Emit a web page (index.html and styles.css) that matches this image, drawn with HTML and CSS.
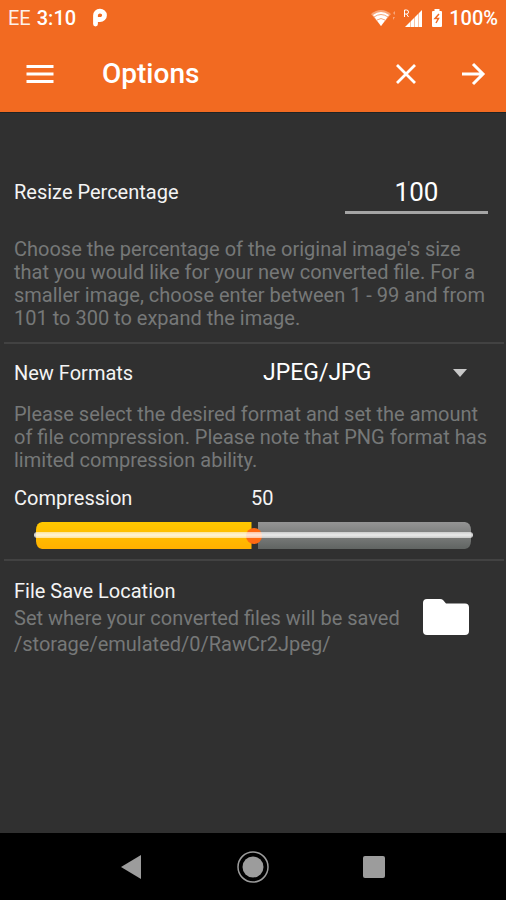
FILE: index.html
```html
<!DOCTYPE html>
<html lang="en">
<head>
<meta charset="utf-8">
<meta name="viewport" content="width=device-width, initial-scale=1">
<title>Options</title>
<link rel="stylesheet" href="styles.css">
</head>
<body>
<header class="top">
  <div class="status">
    <span class="carrier">EE</span>
    <span class="strong">3:10</span>
    <svg class="p-icon" width="16" height="20" viewBox="0 0 16 20" aria-hidden="true"><path d="M3.500 16V7.500A4.500 4.200 0 1 1 8 11.500H6.500" fill="none" stroke="#fff" stroke-width="4.800" stroke-linecap="round" stroke-linejoin="round"/></svg>
    <span class="grow"></span>
    <svg width="56" height="22" viewBox="0 0 56 22" aria-hidden="true">
      <path d="M0 7Q10 -1 20 7L10 19Z" fill="#fff" opacity=".4"/>
      <path d="M2 8Q10 2 18 8L10 19Z" fill="#fff"/>
      <path d="M3 10Q10 5 17 10M6 13Q10 10 14 13" fill="none" stroke="#f26a21" stroke-width="1" opacity=".6"/>
      <path d="M22 6l2-2v4zM22 10h2l-2 3z" fill="#fff" opacity=".4"/>
      <path d="M33.500 10V3H35.500Q37.500 3 37.500 5T35.500 7H33.500M35.500 7L37.500 10" fill="none" stroke="#fff" stroke-width="1"/>
      <path d="M34 20L51 3V20Z" fill="#fff"/>
      <path d="M39.500 14V20M43.500 10V20M47.500 6V20" stroke="#f26a21" stroke-width="1" opacity=".4"/>
    </svg>
    <svg class="battery" width="12" height="20" viewBox="0 0 12 20" aria-hidden="true"><path d="M3.500 1h5v2H10a1 1 0 0 1 1 1V18a1 1 0 0 1-1 1H2a1 1 0 0 1-1-1V4a1 1 0 0 1 1-1h1.500z" fill="#fff"/><path d="M8 6L4 10.500H7.500L5 15" fill="none" stroke="#f26a21" stroke-width="1.500"/></svg>
    <span class="strong">100%</span>
  </div>
  <div class="toolbar">
    <button class="icon-button" type="button" aria-label="Menu"><svg width="28" height="28" viewBox="0 0 28 28"><path d="M0.500 6.500H27.500M0.500 14H27.500M0.500 21.500H27.500" stroke="#fff" stroke-width="3"/></svg></button>
    <h1>Options</h1>
    <button class="icon-button" type="button" aria-label="Cancel"><svg width="28" height="28" viewBox="0 0 28 28"><path d="M5 5L23 23M23 5L5 23" stroke="#fff" stroke-width="2.800"/></svg></button>
    <button class="icon-button" type="button" aria-label="Next"><svg width="28" height="28" viewBox="0 0 28 28"><path d="M3 14H24M14 4L24 14L14 24" fill="none" stroke="#fff" stroke-width="3"/></svg></button>
  </div>
</header>
<main>
  <section class="resize">
    <div class="row">
      <label for="percent">Resize Percentage</label>
      <input class="percent" id="percent" type="text" inputmode="numeric" value="100">
    </div>
    <p class="hint">Choose the percentage of the original image's size that you would like for your new converted file. For a smaller image, choose enter between 1 - 99 and from 101 to 300 to expand the image.</p>
  </section>
  <section class="formats">
    <div class="split">
      <label for="format">New Formats</label>
      <div class="select">
        <select id="format"><option>JPEG/JPG</option><option>PNG</option></select>
        <svg width="14" height="8" viewBox="0 0 14 8" aria-hidden="true"><path d="M0 0H14L7 8Z" fill="#c8c8c8"/></svg>
      </div>
    </div>
    <p class="hint">Please select the desired format and set the amount of file compression. Please note that PNG format has limited compression ability.</p>
    <div class="split compression">
      <label for="compression">Compression</label>
      <output for="compression">50</output>
    </div>
    <div class="slider"><input id="compression" type="range" min="0" max="100" value="50"></div>
  </section>
  <section class="location">
    <div class="location-text">
      <h2>File Save Location</h2>
      <p>Set where your converted files will be saved</p>
      <p>/storage/emulated/0/RawCr2Jpeg/</p>
    </div>
    <button class="folder" type="button" aria-label="Choose folder"><svg width="48" height="38" viewBox="0 0 48 38"><path d="M5 1H18Q20 1 21 2L24 5.500H43Q47 5.500 47 9.500V33Q47 37 43 37H5Q1 37 1 33V5Q1 1 5 1Z" fill="#fff"/></svg></button>
  </section>
</main>
<nav class="system">
  <button type="button" aria-label="Back"><svg width="32" height="32" viewBox="0 0 32 32"><path d="M5 16L25 4V28Z" fill="#9c9c9c"/></svg></button>
  <button type="button" aria-label="Home"><svg width="32" height="32" viewBox="0 0 32 32"><circle cx="16" cy="16" r="15" fill="none" stroke="#9c9c9c" stroke-width="1.500"/><circle cx="16" cy="16" r="10.500" fill="#9c9c9c"/></svg></button>
  <button type="button" aria-label="Recent apps"><svg width="32" height="32" viewBox="0 0 32 32"><rect x="5" y="5" width="22" height="22" rx="2" fill="#9c9c9c"/></svg></button>
</nav>
</body>
</html>
```
FILE: styles.css
```css
* { box-sizing: border-box; }

body {
  margin: 0;
  min-height: 100vh;
  display: flex;
  flex-direction: column;
  background: #303030;
  color: #f4f4f4;
  font: 20px/24px Roboto, sans-serif;
}

button {
  border: 0;
  padding: 0;
  background: none;
  display: grid;
  place-items: center;
}

svg { display: block; flex: none; }
h1, h2, p { margin: 0; }

.top {
  background: #f26a21;
  color: #fff;
  border-bottom: 1px solid #202424;
}

.status {
  display: flex;
  align-items: center;
  height: 36px;
  padding: 0 8px;
}
.strong { font-weight: 500; }
.carrier { margin-right: 6px; opacity: .9; }
.p-icon { margin-left: 16px; }
.grow { flex: 1; }
.battery { margin: 0 6px 0 4px; }

.toolbar {
  display: flex;
  align-items: center;
  height: 76px;
  padding: 0 13px 0 19px;
  gap: 26px;
}
.icon-button { width: 41px; height: 48px; }
h1 {
  flex: 1;
  padding-left: 16px;
  font-size: 28px;
  font-weight: 500;
  line-height: 34px;
}

main { flex: 1; }
section {
  margin: 0 2px 0 4px;
  padding: 0 16px 0 10px;
  border-bottom: 2px solid #424242;
}
section:last-child { border: 0; }

.hint, .location p { color: #767878; }
.hint { margin-right: -8px; line-height: 23px; }

.resize { padding-top: 57px; padding-bottom: 12px; }
.row {
  display: flex;
  justify-content: space-between;
  align-items: center;
  margin-bottom: 24px;
}
.percent {
  width: 143px;
  height: 44px;
  padding: 3px 0 0;
  border: 0;
  border-bottom: 3px solid #a4a4a4;
  background: none;
  color: #fff;
  font: 26px/32px Roboto, sans-serif;
  text-align: center;
}

.formats { padding-top: 11px; padding-bottom: 10px; }
.split {
  display: grid;
  grid-template-columns: 1fr 1fr;
  align-items: center;
  margin-bottom: 12px;
}
.select { display: flex; align-items: center; padding: 0 21px 0 12px; }
select {
  flex: 1;
  height: 36px;
  padding: 0;
  border: 0;
  appearance: none;
  background: none;
  color: #fff;
  font: 23px/32px Roboto, sans-serif;
}
.compression { margin: 14px 0 12px; }

.slider {
  position: relative;
  margin: 0 15px 0 20px;
}
.slider::after {
  content: "";
  position: absolute;
  inset: 10px 0 auto;
  height: 6px;
  border-radius: 3px;
  background: linear-gradient(#fff9, #fffc 40%, #fffc 60%, #fff9);
  pointer-events: none;
}
input[type="range"] {
  display: block;
  width: 100%;
  height: 27px;
  margin: 0;
  padding: 0 2px;
  border-radius: 8px;
  border: 0 solid transparent;
  appearance: none;
  background:
    linear-gradient(#ffc800, #ffb000) 0 0 / calc(50% - 2px) 100% no-repeat content-box,
    linear-gradient(#949494, #606462) 100% 0 / calc(50% - 4px) 100% no-repeat content-box;
}
input[type="range"]::-webkit-slider-thumb {
  appearance: none;
  width: 16px;
  height: 16px;
  border-radius: 50%;
  background: #ff6a13;
}

.location {
  display: flex;
  align-items: center;
  justify-content: space-between;
  padding-top: 16px;
  padding-right: 34px;
}
h2 { font-size: 20px; font-weight: 400; line-height: 28px; }
.location p { line-height: 26px; }

.system {
  display: flex;
  justify-content: center;
  align-items: center;
  gap: 89px;
  height: 67px;
  background: #000;
}
```
